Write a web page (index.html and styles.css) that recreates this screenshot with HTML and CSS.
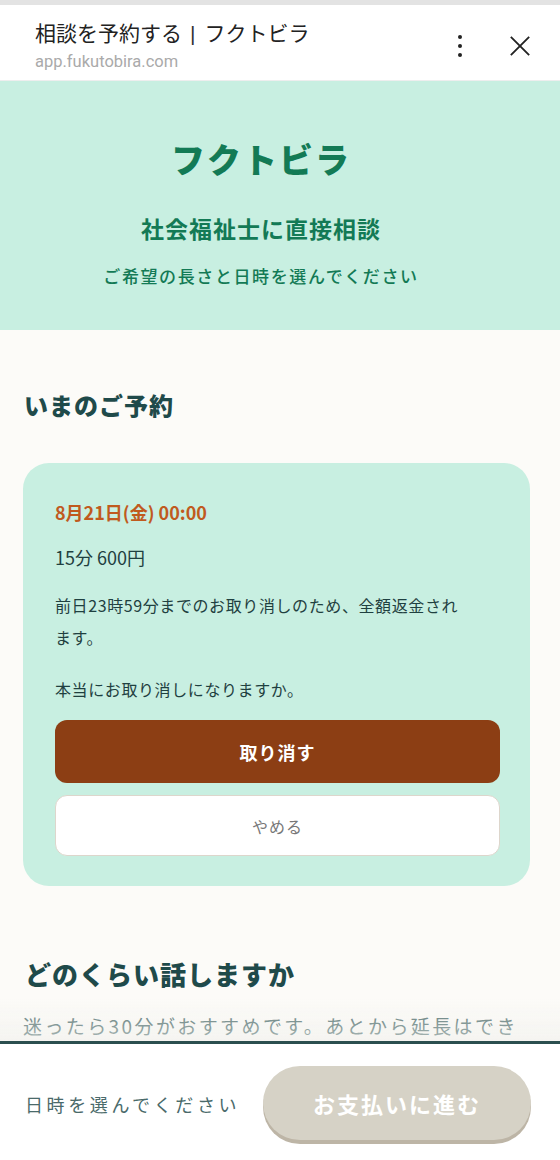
FILE: index.html
```html
<!DOCTYPE html>
<html lang="ja">
<head>
  <meta charset="UTF-8">
  <title>相談を予約する | フクトビラ</title>
  <link rel="stylesheet" href="styles.css">
</head>
<body>
  <header class="chrome">
    <div class="chrome-text">
      <div class="chrome-title">相談を予約する<span class="sep">|</span>フクトビラ</div>
      <div class="chrome-url">app.fukutobira.com</div>
    </div>
    <div class="chrome-icons">
      <svg class="kebab" width="8" height="24" viewBox="0 0 8 24">
        <circle cx="4" cy="3" r="2"/>
        <circle cx="4" cy="12" r="2"/>
        <circle cx="4" cy="21" r="2"/>
      </svg>
      <svg class="close" width="24" height="24" viewBox="0 0 24 24">
        <path d="M2 2 L22 22 M22 2 L2 22"/>
      </svg>
    </div>
  </header>

  <section class="hero">
    <h1 class="brand">フクトビラ</h1>
    <p class="lead">社会福祉士に直接相談</p>
    <p class="sub">ご希望の長さと日時を選んでください</p>
  </section>

  <main class="content">
    <h2>いまのご予約</h2>
    <div class="card">
      <div class="date">8月21日(金) 00:00</div>
      <div class="plan">15分 600円</div>
      <p class="note">前日23時59分までのお取り消しのため、全額返金されます。</p>
      <p class="confirm">本当にお取り消しになりますか。</p>
      <button class="btn-cancel">取り消す</button>
      <button class="btn-keep">やめる</button>
    </div>

    <h2 class="second">どのくらい話しますか</h2>
    <p class="hint">迷ったら30分がおすすめです。あとから延長はできます。</p>
  </main>

  <footer class="bar">
    <span class="bar-text">日時を選んでください</span>
    <button class="btn-pay" disabled>お支払いに進む</button>
  </footer>
</body>
</html>
```

FILE: styles.css
```css
body {
  margin: 0;
  background: #fcfbf8;
  font-family: "Noto Sans CJK JP", "Noto Sans", sans-serif;
  color: #1f4040;
}

/* browser custom tab header */
.chrome {
  display: flex;
  justify-content: space-between;
  align-items: flex-start;
  background: #fff;
  border-top: 5px solid #e3e3e3;
  border-bottom: 1px solid #eee;
  height: 81px;
  box-sizing: border-box;
  padding: 13px 0 0 35px;
}

.chrome-title {
  font-size: 21px;
  line-height: 28px;
  color: #222;
}

.sep {
  display: inline-block;
  margin: 0 9px 0 8px;
  font-family: "Liberation Sans", sans-serif;
  font-weight: 300;
  color: #333;
}

.chrome-url {
  margin-top: 4px;
  font-family: Roboto, "Noto Sans", sans-serif;
  font-size: 16.5px;
  line-height: 20px;
  color: #aaa;
}

.chrome-icons {
  display: flex;
  align-items: center;
  gap: 45px;
  padding: 16px 29px 0 0;
}

.kebab {
  fill: #222;
}

.close path {
  stroke: #222;
  stroke-width: 2;
  fill: none;
}

.close {
  width: 22px;
  height: 22px;
}

/* hero */
.hero {
  background: #c8efe1;
  text-align: center;
  padding: 57px 38px 41px 0;
  color: #137a55;
}

.brand {
  margin: 0;
  font-size: 34px;
  line-height: 41px;
  letter-spacing: 2px;
  font-weight: 900;
}

.lead {
  margin: 32px 0 0;
  font-size: 23px;
  line-height: 34px;
  font-weight: 700;
  letter-spacing: 1px;
}

.sub {
  margin: 18px 0 0;
  font-size: 17px;
  line-height: 26px;
  font-weight: 500;
  letter-spacing: 1.6px;
}

/* main */
.content {
  padding: 58px 30px 130px 23px;
}

h2 {
  margin: 0 0 41px 1px;
  font-size: 24px;
  line-height: 34px;
  font-weight: 900;
  letter-spacing: 1px;
  color: #1f4a4a;
}

h2.second {
  margin: 70px 0 19px 2px;
  font-size: 26px;
  line-height: 36px;
}

.card {
  background: #c8efe1;
  border-radius: 26px;
  padding: 36px 30px 30px 32px;
  display: flex;
  flex-direction: column;
}

.date {
  color: #c05a1e;
  font-size: 18px;
  line-height: 27px;
  font-weight: 700;
}

.plan {
  margin-top: 18px;
  font-size: 18px;
  line-height: 27px;
}

.note {
  margin: 18px 0 0;
  max-width: 410px;
  font-size: 16px;
  line-height: 32px;
  letter-spacing: 0.6px;
}

.confirm {
  margin: 20px 0 0;
  font-size: 16px;
  line-height: 32px;
  letter-spacing: 0.6px;
}

.btn-cancel {
  margin-top: 15px;
  height: 63px;
  border: none;
  border-radius: 12px;
  background: #8c3e14;
  color: #fff;
  font-family: inherit;
  font-size: 18px;
  font-weight: 700;
  letter-spacing: 1px;
  cursor: pointer;
}

.btn-keep {
  margin-top: 12px;
  height: 61px;
  border: 1px solid #ddd6cc;
  border-radius: 12px;
  background: #fff;
  color: #777;
  font-family: inherit;
  font-size: 16px;
  letter-spacing: 1px;
  cursor: pointer;
}

.hint {
  margin: 0;
  font-size: 19px;
  line-height: 30px;
  letter-spacing: 2.4px;
  color: #4a6a6a;
}

/* bottom bar */
.bar {
  position: fixed;
  left: 0;
  right: 0;
  bottom: 0;
  height: 119px;
  box-sizing: border-box;
  background: #fff;
  border-top: 3px solid #2b4f4f;
  display: flex;
  align-items: center;
  justify-content: space-between;
  padding: 0 29px 0 25px;
}

.bar::before {
  content: "";
  position: absolute;
  left: 0;
  right: 0;
  top: -45px;
  height: 42px;
  background: linear-gradient(rgba(255, 255, 255, 0), rgba(240, 240, 236, 0.6));
  pointer-events: none;
}

.bar-text {
  font-size: 18px;
  letter-spacing: 3.6px;
  color: #4a6a6a;
  margin-top: 4px;
}

.btn-pay {
  width: 268px;
  height: 74px;
  margin-top: 2px;
  border: none;
  border-radius: 37px;
  background: #d6d2c6;
  box-shadow: 0 4px 0 #bdb5a6;
  color: #fff;
  font-family: inherit;
  font-size: 22px;
  font-weight: 700;
  letter-spacing: 2px;
}
```
